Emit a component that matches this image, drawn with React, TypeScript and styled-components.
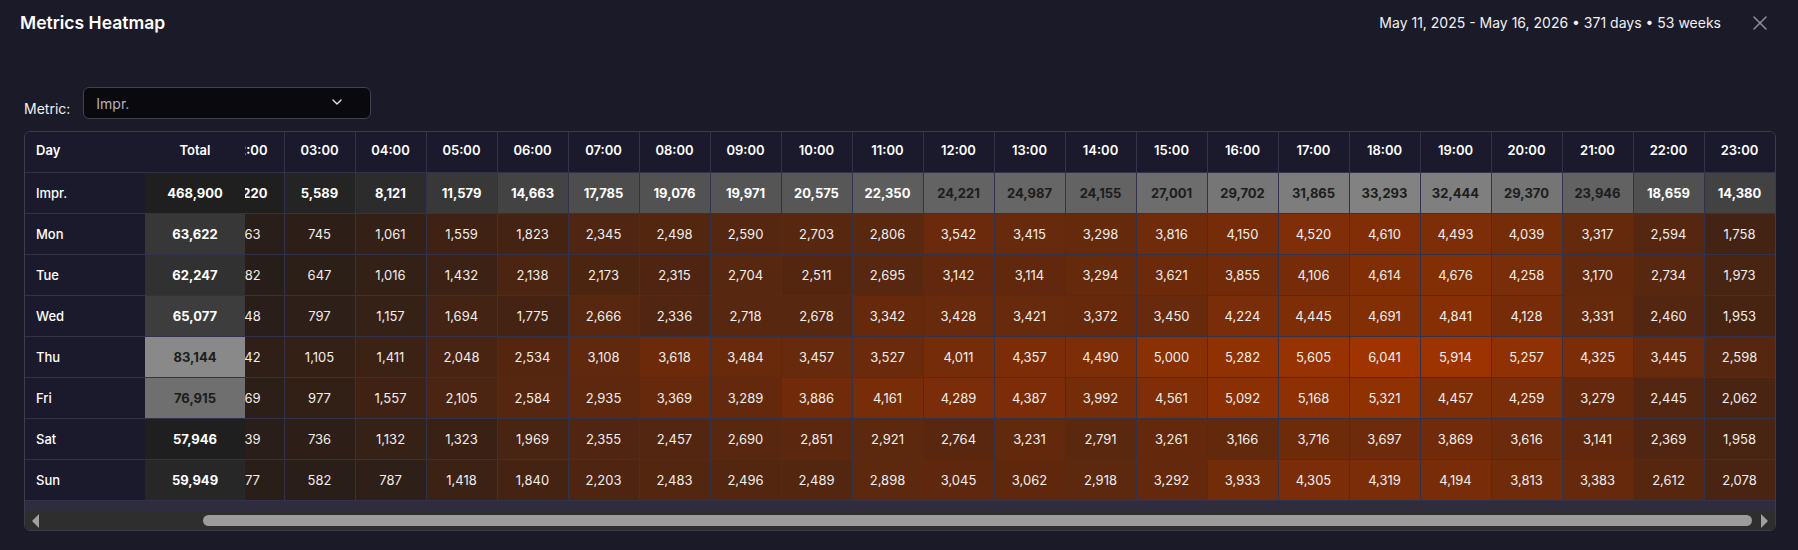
import * as React from 'react';
import styled, { createGlobalStyle } from 'styled-components';
import { ChevronDown, X } from 'lucide-react';

const HOURS = Array.from({ length: 24 }, (_, i) => `${String(i).padStart(2, '0')}:00`);

const IMPR = {
  label: 'Impr.',
  total: 468900,
  values: [
    5968, 4980, 4220, 5589, 8121, 11579, 14663, 17785, 19076, 19971, 20575, 22350, 24221, 24987, 24155, 27001, 29702,
    31865, 33293, 32444, 29370, 23946, 18659, 14380,
  ],
};

const DAYS = [
  {
    label: 'Mon',
    total: 63622,
    values: [
      840, 690, 563, 745, 1061, 1559, 1823, 2345, 2498, 2590, 2703, 2806, 3542, 3415, 3298, 3816, 4150, 4520, 4610, 4493,
      4039, 3317, 2594, 1758,
    ],
  },
  {
    label: 'Tue',
    total: 62247,
    values: [
      790, 650, 482, 647, 1016, 1432, 2138, 2173, 2315, 2704, 2511, 2695, 3142, 3114, 3294, 3621, 3855, 4106, 4614, 4676,
      4258, 3170, 2734, 1973,
    ],
  },
  {
    label: 'Wed',
    total: 65077,
    values: [
      860, 710, 548, 797, 1157, 1694, 1775, 2666, 2336, 2718, 2678, 3342, 3428, 3421, 3372, 3450, 4224, 4445, 4691, 4841,
      4128, 3331, 2460, 1953,
    ],
  },
  {
    label: 'Thu',
    total: 83144,
    values: [
      1010, 850, 842, 1105, 1411, 2048, 2534, 3108, 3618, 3484, 3457, 3527, 4011, 4357, 4490, 5000, 5282, 5605, 6041, 5914,
      5257, 4325, 3445, 2598,
    ],
  },
  {
    label: 'Fri',
    total: 76915,
    values: [
      950, 790, 669, 977, 1557, 2105, 2584, 2935, 3369, 3289, 3886, 4161, 4289, 4387, 3992, 4561, 5092, 5168, 5321, 4457,
      4259, 3279, 2445, 2062,
    ],
  },
  {
    label: 'Sat',
    total: 57946,
    values: [
      750, 640, 539, 736, 1132, 1323, 1969, 2355, 2457, 2690, 2851, 2921, 2764, 3231, 2791, 3261, 3166, 3716, 3697, 3869,
      3616, 3141, 2369, 1958,
    ],
  },
  {
    label: 'Sun',
    total: 59949,
    values: [
      768, 650, 577, 582, 787, 1418, 1840, 2203, 2483, 2496, 2489, 2898, 3045, 3062, 2918, 3292, 3933, 4305, 4319, 4194,
      3813, 3383, 2612, 2078,
    ],
  },
];

const TABLE_WIDTH = 1924;
const VIEW_WIDTH = 1750;
const ARROW_WIDTH = 21;

const fmt = (n: number) => n.toLocaleString('en-US');

// grey ramp for the totals, lowest value is #1f1f1f
const greyCell = (value: number, min: number, max: number, range: number) => {
  const t = (value - min) / (max - min);
  const g = Math.round(31 + t * range);
  return { bg: `rgb(${g},${g},${g})`, dark: t > 0.65 };
};

const heat = (value: number) => {
  const t = Math.max(0, (value - 500) / (6041 - 500));
  const mix = (a: number, b: number) => Math.round(a + (b - a) * t);
  return `rgb(${mix(40, 160)},${mix(30, 52)},${mix(25, 0)})`;
};

export default function App() {
  const scrollRef = React.useRef<HTMLDivElement>(null);
  const [scrollLeft, setScrollLeft] = React.useState(0);

  React.useLayoutEffect(() => {
    const el = scrollRef.current;
    if (el) {
      el.scrollLeft = el.scrollWidth - el.clientWidth;
      setScrollLeft(el.scrollLeft);
    }
  }, []);

  const trackWidth = VIEW_WIDTH - ARROW_WIDTH * 2;
  const thumbWidth = (trackWidth * VIEW_WIDTH) / TABLE_WIDTH;
  const thumbOffset = (trackWidth * scrollLeft) / TABLE_WIDTH;

  return (
    <Page>
      <GlobalStyle />
      <Header>
        <Title>Metrics Heatmap</Title>
        <HeaderRight>
          <Range>May 11, 2025 - May 16, 2026 • 371 days • 53 weeks</Range>
          <CloseButton aria-label="Close">
            <X size={24} strokeWidth={1.5} />
          </CloseButton>
        </HeaderRight>
      </Header>

      <Toolbar>
        <MetricLabel>Metric:</MetricLabel>
        <Select>
          <SelectValue>Impr.</SelectValue>
          <ChevronDown size={16} />
        </Select>
      </Toolbar>

      <TableFrame>
        <Scroller ref={scrollRef}>
          <Table>
            <thead>
              <tr>
                <DayHead>Day</DayHead>
                <TotalHead>Total</TotalHead>
                {HOURS.map(h => (
                  <HourHead key={h}>{h}</HourHead>
                ))}
              </tr>
            </thead>
            <tbody>
              <tr>
                <DayCell>{IMPR.label}</DayCell>
                <TotalCell style={{ backgroundColor: '#1f1f1f' }}>{fmt(IMPR.total)}</TotalCell>
                {IMPR.values.map((v, i) => {
                  const c = greyCell(v, 4220, 33293, 99);
                  return (
                    <SumCell key={i} $dark={c.dark} style={{ backgroundColor: c.bg }}>
                      {fmt(v)}
                    </SumCell>
                  );
                })}
              </tr>
              {DAYS.map(day => {
                const t = greyCell(day.total, 57946, 83144, 106);
                return (
                  <tr key={day.label}>
                    <DayCell>{day.label}</DayCell>
                    <TotalCell $dark={t.dark} style={{ backgroundColor: t.bg }}>
                      {fmt(day.total)}
                    </TotalCell>
                    {day.values.map((v, i) => (
                      <HeatCell key={i} style={{ backgroundColor: heat(v) }}>
                        {fmt(v)}
                      </HeatCell>
                    ))}
                  </tr>
                );
              })}
            </tbody>
          </Table>
        </Scroller>
        <ScrollBar>
          <ArrowButton aria-label="Scroll left">
            <svg width="7" height="14" viewBox="0 0 7 14">
              <polygon points="7,0 0,7 7,14" fill="#a0a0a0" />
            </svg>
          </ArrowButton>
          <ThumbTrack>
            <Thumb style={{ width: thumbWidth - 5, marginLeft: thumbOffset + 3 }} />
          </ThumbTrack>
          <ArrowButton aria-label="Scroll right">
            <svg width="7" height="14" viewBox="0 0 7 14">
              <polygon points="0,0 7,7 0,14" fill="#a0a0a0" />
            </svg>
          </ArrowButton>
        </ScrollBar>
      </TableFrame>
    </Page>
  );
}

const GlobalStyle = createGlobalStyle`
  html, body {
    margin: 0;
    height: 100%;
    background: #1a1a28;
    overflow: hidden;
  }
  body {
    font-family: Inter, "Liberation Sans", sans-serif;
    color: #fff;
  }
`;

const LINE = '#32324a';
const HEAD_BG = '#1a1a2c';

const Page = styled.div`
  box-sizing: border-box;
  width: 1798px;
  height: 550px;
  padding: 0 22px 0 24px;
  background: #1a1a28;
`;

const Header = styled.header`
  display: flex;
  align-items: center;
  justify-content: space-between;
  height: 44px;
  margin-left: -4px;
`;

const Title = styled.h2`
  margin: 0;
  font-size: 17.5px;
  font-weight: 600;
  color: #fff;
`;

const HeaderRight = styled.div`
  display: flex;
  align-items: center;
  gap: 27px;
`;

const Range = styled.span`
  font-size: 14px;
  color: #f0f0f2;
`;

const CloseButton = styled.button`
  display: flex;
  width: 24px;
  height: 24px;
  padding: 0;
  margin: 2px 4px 0 0;
  border: 0;
  background: none;
  color: #8f8f98;
  cursor: pointer;
`;

const Toolbar = styled.div`
  display: flex;
  align-items: flex-end;
  gap: 13px;
  height: 32px;
  margin-top: 43px;
  margin-bottom: 12px;
`;

const MetricLabel = styled.label`
  padding-bottom: 2px;
  font-size: 14px;
  color: #f0f0f2;
`;

const Select = styled.div`
  box-sizing: border-box;
  display: flex;
  align-items: center;
  justify-content: space-between;
  width: 288px;
  height: 32px;
  padding: 0 25px 0 12px;
  border: 1px solid #42424e;
  border-radius: 6px;
  background: #0a0a0e;
  font-size: 14px;
  color: #b3b1bb;

  svg {
    margin-bottom: 2px;
    color: #e4e4e8;
  }
`;

const SelectValue = styled.span`
  padding-top: 1px;
`;

const TableFrame = styled.div`
  box-sizing: border-box;
  display: flex;
  flex-direction: column;
  width: 1752px;
  height: 400px;
  border: 1px solid #3c3c4a;
  border-radius: 6px;
  overflow: hidden;
`;

const Scroller = styled.div`
  flex: 1;
  min-height: 0;
  overflow: hidden;
  background: #2f2d3d;
`;

const ScrollBar = styled.div`
  display: flex;
  align-items: center;
  height: 19px;
  background: #2e2e2e;
`;

const ArrowButton = styled.button`
  display: flex;
  align-items: center;
  justify-content: center;
  flex: 0 0 ${ARROW_WIDTH}px;
  height: 100%;
  padding: 0;
  border: 0;
  background: none;
`;

const ThumbTrack = styled.div`
  display: flex;
  flex: 1;
`;

const Thumb = styled.div`
  height: 11px;
  border-radius: 6px;
  background: #9c9c9c;
`;

const Table = styled.table`
  border-collapse: separate;
  border-spacing: 0;
  table-layout: fixed;
  width: ${TABLE_WIDTH}px;
  font-size: 13px;
`;

const BaseCell = styled.td`
  box-sizing: border-box;
  height: 41px;
  padding: 0;
  border-bottom: 1px solid ${LINE};
  text-align: center;
  white-space: nowrap;
`;

const HourHead = styled(BaseCell).attrs({ as: 'th' })`
  width: 71px;
  padding: 0 1px 4px 0;
  border-left: 1px solid ${LINE};
  background: ${HEAD_BG};
  font-weight: 600;
  color: #fff;
`;

const DayHead = styled(BaseCell).attrs({ as: 'th' })`
  position: sticky;
  left: 0;
  z-index: 2;
  width: 120px;
  padding: 0 0 4px 11px;
  background: ${HEAD_BG};
  font-weight: 600;
  text-align: left;
`;

const TotalHead = styled(BaseCell).attrs({ as: 'th' })`
  position: sticky;
  left: 120px;
  z-index: 2;
  width: 100px;
  padding-bottom: 4px;
  background: ${HEAD_BG};
  font-weight: 600;
`;

const DayCell = styled(BaseCell)`
  position: sticky;
  left: 0;
  z-index: 1;
  padding-left: 11px;
  background: ${HEAD_BG};
  font-weight: 500;
  text-align: left;
`;

const TotalCell = styled(BaseCell)<{ $dark?: boolean }>`
  position: sticky;
  left: 120px;
  z-index: 1;
  font-weight: 700;
  color: ${p => (p.$dark ? '#1c1c1c' : '#fff')};
`;

const SumCell = styled(BaseCell)<{ $dark?: boolean }>`
  padding-right: 1px;
  border-left: 1px solid ${LINE};
  font-weight: 700;
  color: ${p => (p.$dark ? '#1c1c1c' : '#fff')};
`;

const HeatCell = styled(BaseCell)`
  padding-right: 1px;
  border-left: 1px solid ${LINE};
  color: #f2efec;
`;
